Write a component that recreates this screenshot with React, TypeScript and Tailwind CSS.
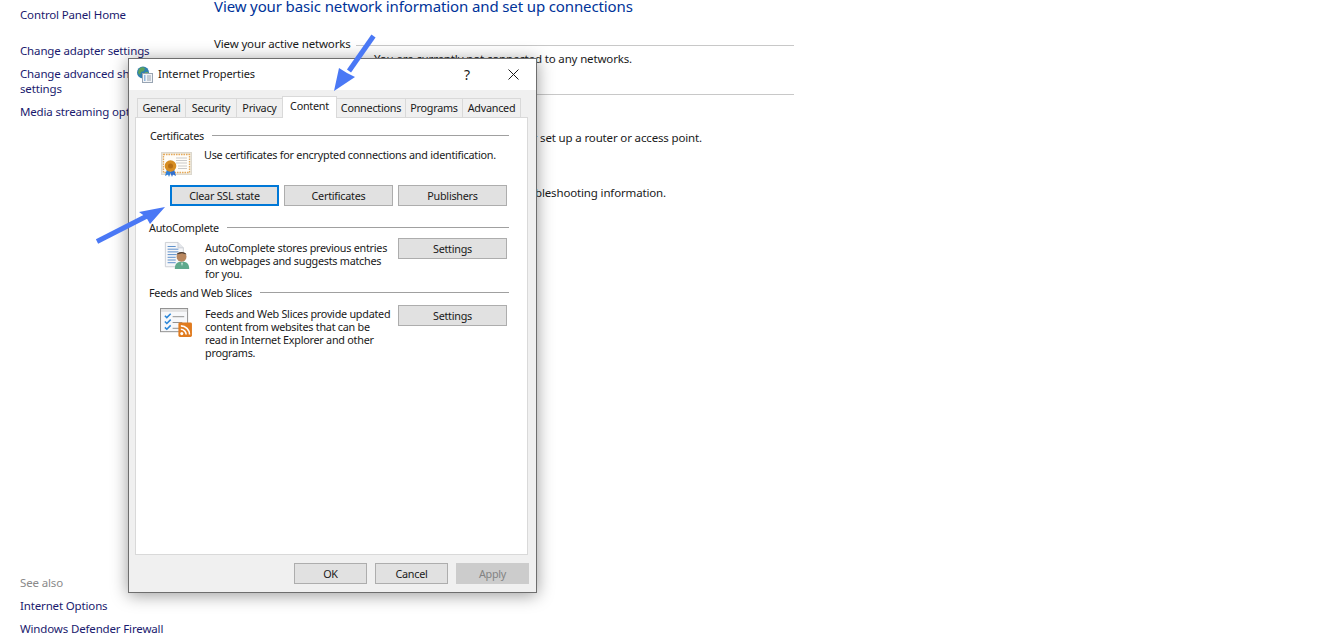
const font = "font-['Noto_Sans','Open_Sans',sans-serif]";

function Arrows() {
  return (
    <svg className="absolute left-0 top-0 pointer-events-none" width="1328" height="639" viewBox="0 0 1328 639">
      <line x1={373.500} y1={36} x2={349} y2={71} stroke="#4a78f5" strokeWidth="5" />
      <polygon points="334,91 339,68 347,73 355,77" fill="#4a78f5" />
      <line x1={97} y1={241.500} x2={147} y2={216} stroke="#4a78f5" strokeWidth="5" />
      <polygon points="165,207 139,212 146,217 150,224" fill="#4a78f5" />
    </svg>
  );
}

function GroupTitle({ title, className }: { title: string; className: string }) {
  return (
    <div className={`flex items-center gap-2 h-[15px] ${className}`}>
      <span className="text-[#1a1a1a] whitespace-nowrap">{title}</span>
      <div className="h-px flex-1 bg-[#a0a0a0]" />
    </div>
  );
}

function WinButton({ label, className = "", focus = false, disabled = false }: { label: string; className?: string; focus?: boolean; disabled?: boolean }) {
  const border = focus ? "border-2 border-[#0078d7]" : disabled ? "border border-[#cccccc]" : "border border-[#adadad]";
  const bg = disabled ? "bg-[#cccccc] text-[#838383]" : "bg-[#e1e1e1] text-[#1a1a1a]";
  return (
    <div className={`flex items-center justify-center h-[21px] shrink-0 ${border} ${bg} ${className}`}>{label}</div>
  );
}

function Tab({ label, active = false, w }: { label: string; active?: boolean; w: string }) {
  if (active) {
    return (
      <div className={`${w} h-[22px] -ml-px z-10 flex items-start justify-center pt-[1px] bg-white border border-b-0 border-[#d9d9d9] text-[#1a1a1a]`}>
        {label}
      </div>
    );
  }
  return (
    <div className={`${w} h-[19px] mb-[1px] -ml-px flex items-start justify-center pt-[1px] bg-[#f0f0f0] border border-b-0 border-[#d9d9d9] text-[#1a1a1a]`}>
      {label}
    </div>
  );
}

function GlobeIcon() {
  return (
    <svg width="17" height="17" viewBox="0 0 17 17">
      <circle cx="7" cy="6.500" r="6" fill="#2f7fb0" />
      <path d="M3 3c2-2 4-2 6-1l-1 3-3 1-1 3-2-2z" fill="#5ea15a" />
      <path d="M9 6l3 0 0 3-2 1z" fill="#6aa866" />
      <rect x="6.500" y="7.500" width="10" height="9" fill="#f2f4f7" stroke="#98a4b2" />
      <path d="M8 10h1.500M8 12h1.500M8 14h1.500" stroke="#2f78c4" />
      <path d="M11 10h4M11 12h4M11 14h4" stroke="#98a4b2" />
    </svg>
  );
}

function CertIcon() {
  return (
    <svg width="31" height="26" viewBox="0 0 31 26">
      <rect x="0.500" y="0.500" width="30" height="22" fill="#ece8dd" stroke="#dcd8ce" />
      <rect x="2.500" y="2.500" width="26" height="18" fill="#fffdf8" stroke="#e6a95a" strokeWidth="1.300" strokeDasharray="1.500 1" />
      <path d="M15 6h11M15 8.500h11M15 11h11M17 14h9M17 16.500h9" stroke="#c9c9c9" />
      <path d="M6 17l-2 7 3-1.500 1 2.500 2-5z" fill="#2f7fd6" />
      <path d="M13 17l2 7-3-1.500-1 2.500-2-5z" fill="#2f6fd0" />
      <circle cx="9.500" cy="14" r="5.800" fill="#d68d22" />
      <circle cx="9.500" cy="14" r="2.500" fill="#b56d14" />
    </svg>
  );
}

function PersonIcon() {
  return (
    <svg width="27" height="31" viewBox="0 0 30 32">
      <path d="M1.500 1.500h14l6 6v21h-20z" fill="#f6f7f9" stroke="#c8ccd2" />
      <path d="M15.500 1.500v6h6" fill="#e3e6ea" stroke="#c8ccd2" />
      <path d="M4 6h9M4 9h12M4 12h12M4 15h10M4 18h9M4 21h9M4 24h9" stroke="#4f86c6" />
      <path d="M12 31c0-6 3-8 8-8s8 2 8 8z" fill="#5fa98c" />
      <circle cx="19.500" cy="17.500" r="5.500" fill="#b8875f" />
      <path d="M14 15c1-4 10-4 11 0l-5-1.500z" fill="#4a3d33" />
      <path d="M19 24l1 4 1-4z" fill="#dfeee8" />
    </svg>
  );
}

function FeedIcon() {
  return (
    <svg width="32" height="29" viewBox="0 0 33 30">
      <rect x="0.500" y="0.500" width="28" height="24" fill="#f7f8fa" stroke="#8e8e8e" />
      <rect x="1" y="1" width="27" height="3" fill="#e2e2e2" />
      <path d="M5 8l2 2 4-4M5 14l2 2 4-4M5 20l2 2 4-4" fill="none" stroke="#2a86d8" strokeWidth="1.600" />
      <path d="M13 9h12M13 15h10M13 21h8" stroke="#8e8e8e" />
      <rect x="19" y="15" width="14" height="15" rx="1.500" fill="#e07b1f" />
      <circle cx="22.500" cy="26.500" r="1.600" fill="#fff" />
      <path d="M21.500 22c3 0 5.500 2.500 5.500 5.500M21.500 18.500c5 0 9 4 9 9" fill="none" stroke="#fff" strokeWidth="1.600" />
    </svg>
  );
}

export default function App() {
  return (
    <div className={`relative h-[639px] w-[1328px] overflow-hidden bg-white text-[11.500px] tracking-[-0.150px] leading-[15px] ${font}`}>
      <div className="flex h-full">
        <aside className="w-[214px] shrink-0 pl-[20px] h-full flex flex-col text-[#1a1a6e]">
          <div className="pt-[7px]">Control Panel Home</div>
          <div className="mt-[21px]">Change adapter settings</div>
          <div className="mt-[8px] w-[170px]">Change advanced sharing settings</div>
          <div className="mt-[8px]">Media streaming options</div>
          <div className="mt-auto text-[#8a8a8a]">See also</div>
          <div className="mt-[8px]">Internet Options</div>
          <div className="mt-[8px] mb-[3px]">Windows Defender Firewall</div>
        </aside>
        <main className="w-[580px] shrink-0 text-[#1a1a1a]">
          <div className="-mt-[4px] text-[15px] tracking-[-0.120px] leading-[20px] text-[#003399] whitespace-nowrap">View your basic network information and set up connections</div>
          <div className="mt-[20px] flex items-center gap-[5px]">
            <span>View your active networks</span>
            <div className="mt-[4px] h-px flex-1 bg-[#c8c8c8]" />
          </div>
          <div className="pl-[160px] whitespace-nowrap">You are currently not connected to any networks.</div>
          <div className="mt-[28px] h-px bg-[#c8c8c8]" />
          <div className="mt-[35px] w-[488px] text-right whitespace-nowrap">Set up a broadband, dial-up, or VPN connection; or set up a router or access point.</div>
          <div className="mt-[40px] w-[452px] text-right whitespace-nowrap">Diagnose and repair network problems, or get troubleshooting information.</div>
        </main>
      </div>

      <div className="absolute left-[128px] top-[58px] w-[409px] h-[535px] bg-[#f0f0f0] border border-[#6e6e6e] shadow-[0_2px_16px_rgba(0,0,0,0.4)] flex flex-col text-[#1a1a1a] text-[10.800px] tracking-[-0.250px]">
        <div className="h-[31px] shrink-0 bg-white flex items-center pl-[7px]">
          <GlobeIcon />
          <span className="ml-[5px] mb-[2px] text-[11px] tracking-[-0.080px]">Internet Properties</span>
          <span className="ml-auto mr-[38px] text-[14px] tracking-normal">?</span>
          <svg className="mr-[17px]" width="11" height="11" viewBox="0 0 11 11">
            <path d="M0.500 0.500l10 10M10.500 0.500l-10 10" stroke="#1a1a1a" />
          </svg>
        </div>
        <div className="flex pl-[9px] h-[22px] mt-[6px] items-end relative z-10 shrink-0">
          <Tab label="General" w="w-[49px]" />
          <Tab label="Security" w="w-[52px]" />
          <Tab label="Privacy" w="w-[47px]" />
          <Tab label="Content" active w="w-[55px]" />
          <Tab label="Connections" w="w-[70px]" />
          <Tab label="Programs" w="w-[58px]" />
          <Tab label="Advanced" w="w-[59px]" />
        </div>
        <div className="ml-[6px] mr-[8px] -mt-px h-[438px] shrink-0 bg-white border border-[#d9d9d9] pl-[14px] pr-[18px]">
          <GroupTitle title="Certificates" className="mt-[10px]" />
          <div className="flex mt-[5px] pl-[11px] h-[29px]">
            <div className="pt-[4px]"><CertIcon /></div>
            <span className="ml-[12px] leading-[13px] whitespace-nowrap">Use certificates for encrypted connections and identification.</span>
          </div>
          <div className="flex gap-[5px] mt-[8px] pl-[20px]">
            <WinButton label="Clear SSL state" focus className="w-[109px]" />
            <WinButton label="Certificates" className="w-[109px]" />
            <WinButton label="Publishers" className="w-[109px]" />
          </div>
          <GroupTitle title="AutoComplete" className="mt-[14px] -ml-px" />
          <div className="flex mt-[3px]">
            <div className="w-[55px] pl-[14px] pt-[2px]"><PersonIcon /></div>
            <div className="w-[193px] pt-[3px] leading-[13px] whitespace-nowrap">AutoComplete stores previous entries<br />on webpages and suggests matches<br />for you.</div>
            <WinButton label="Settings" className="w-[109px]" />
          </div>
          <GroupTitle title="Feeds and Web Slices" className="mt-[5px] -ml-px" />
          <div className="flex mt-[5px]">
            <div className="w-[55px] pl-[10px] pt-[3px]"><FeedIcon /></div>
            <div className="w-[193px] pt-[2px] leading-[13px] whitespace-nowrap">Feeds and Web Slices provide updated<br />content from websites that can be<br />read in Internet Explorer and other<br />programs.</div>
            <WinButton label="Settings" className="w-[109px]" />
          </div>
        </div>
        <div className="flex justify-end gap-[8px] pr-[7px] mt-[8px]">
          <WinButton label="OK" className="w-[73px]" />
          <WinButton label="Cancel" className="w-[73px]" />
          <WinButton label="Apply" disabled className="w-[73px]" />
        </div>
      </div>

      <Arrows />
    </div>
  );
}
